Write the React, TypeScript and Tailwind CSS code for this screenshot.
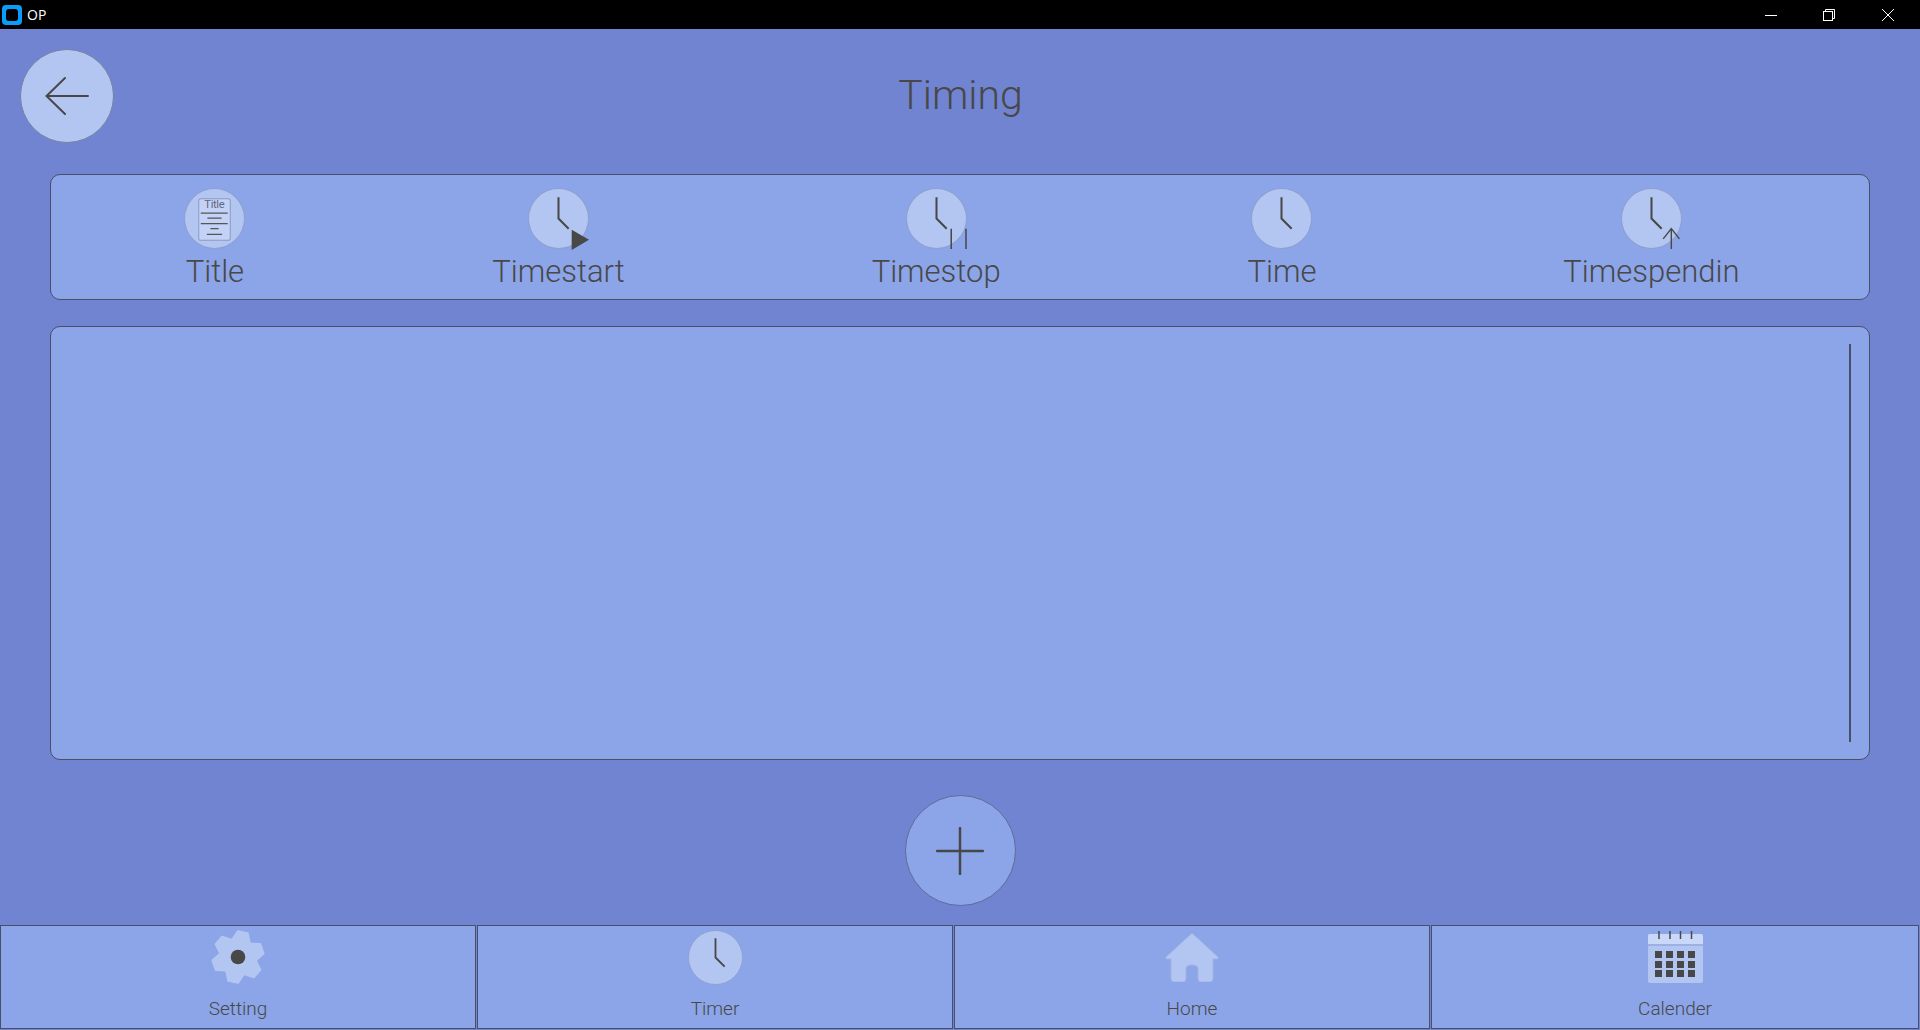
import React from 'react';

const DARK = '#484848';
const FILL = '#b3c6f2';
const RIM = '#8e9fd0';

function ClockIcon({ size = 61, children }: { size?: number; children?: React.ReactNode }) {
  return (
    <svg width={size} height={size} viewBox="0 0 60 60" className="overflow-visible shrink-0">
      <circle cx="30" cy="30" r="29.5" fill={FILL} stroke={RIM} strokeWidth="1" />
      <path d="M30 9V30L40 40" fill="none" stroke={DARK} strokeWidth="2" />
      {children}
    </svg>
  );
}

function TitleIcon() {
  return (
    <svg width="61" height="61" viewBox="0 0 60 60" className="shrink-0">
      <circle cx="30" cy="30" r="29.5" fill={FILL} stroke={RIM} strokeWidth="1" />
      <rect x="14.5" y="10.5" width="31" height="41" rx="2" fill="#c3d2f6" stroke="#8f9bc0" strokeWidth="1" />
      <text x="30" y="20" textAnchor="middle" fontSize="11" fill="#5f6880" fontFamily="Roboto, sans-serif" fontWeight="400" textLength="20">Title</text>
      <path d="M16.5 24.7H43M23 29.7H37M16.5 35H43M26 40H34M22.5 45.7H37.5" fill="none" stroke="#555" strokeWidth="1.3" />
    </svg>
  );
}

function GearIcon() {
  // six teeth, first one 11deg clockwise from straight up
  const pts: string[] = [];
  for (let i = 0; i < 6; i++) {
    const a = 11 + i * 60;
    const offs: [number, number][] = [[-27, 18.5], [-11, 25.5], [11, 25.5], [27, 18.5]];
    offs.forEach(([d, r]) => {
      const rad = ((a + d - 90) * Math.PI) / 180;
      pts.push(`${(27 + r * Math.cos(rad)).toFixed(2)},${(27 + r * Math.sin(rad)).toFixed(2)}`);
    });
  }
  return (
    <svg width="54" height="54" viewBox="0 0 54 54" className="shrink-0 overflow-visible">
      <polygon points={pts.join(' ')} fill={FILL} stroke={FILL} strokeWidth="2.5" strokeLinejoin="round" />
      <circle cx="27" cy="27" r="7.3" fill={DARK} />
    </svg>
  );
}

function HomeIcon() {
  return (
    <svg width="54" height="50" viewBox="0 0 54 50" className="shrink-0">
      <path
        d="M27 1L53 25Q54 27 52 27H48V47Q48 50 45 50H36Q33 50 33 47V37Q33 33 27 33Q21 33 21 37V47Q21 50 18 50H9Q6 50 6 47V27H2Q0 27 1 25Z"
        fill={FILL}
        stroke="#9fb2e6"
        strokeWidth="1"
      />
    </svg>
  );
}

function CalendarIcon() {
  const xs = [7, 18, 29, 40];
  const ys = [20, 30, 39];
  return (
    <svg width="55" height="52" viewBox="0 0 55 52" className="shrink-0">
      <rect x="0" y="3" width="55" height="49" rx="2" fill={FILL} />
      <path d="M0 13V5Q0 3 2 3H53Q55 3 55 5V13Z" fill="#c9d7f8" />
      <rect x="0" y="13" width="55" height="2" fill="#9db0e4" />
      {[11, 22, 32.5, 43.5].map((x) => (
        <path key={x} d="M0 0V8" transform={`translate(${x} 0)`} stroke={DARK} strokeWidth="1.5" />
      ))}
      {ys.map((y) => xs.map((x) => <rect key={`${x}-${y}`} x={x} y={y} width="7" height="7" fill={DARK} />))}
    </svg>
  );
}

const columns = [
  { label: 'Title', icon: <TitleIcon /> },
  {
    label: 'Timestart',
    icon: (
      <ClockIcon>
        <path d="M43 41L60 51L43 61Z" fill={DARK} />
      </ClockIcon>
    ),
  },
  {
    label: 'Timestop',
    icon: (
      <ClockIcon>
        <path d="M44.5 40V60M59 40V60" fill="none" stroke={DARK} strokeWidth="1.5" />
      </ClockIcon>
    ),
  },
  { label: 'Time', icon: <ClockIcon /> },
  {
    label: 'Timespendin',
    icon: (
      <ClockIcon>
        <path d="M49.5 60V40M41.5 50L49.5 40L57.5 50" fill="none" stroke={DARK} strokeWidth="1.4" />
      </ClockIcon>
    ),
  },
];

const tabs = [
  { label: 'Setting', icon: <GearIcon />, cls: 'w-[476px]' },
  { label: 'Timer', icon: <ClockIcon size={55} />, cls: 'w-[476px]' },
  { label: 'Home', icon: <HomeIcon />, cls: 'w-[476px]' },
  { label: 'Calender', icon: <CalendarIcon />, cls: 'w-[488px]' },
];

export default function App() {
  return (
    <div className="w-[1920px] h-[1030px] overflow-hidden flex flex-col bg-[#7084d1] text-[#484848] font-['Roboto',sans-serif] font-light">
      {/* window title bar */}
      <div className="h-[29px] shrink-0 bg-black flex items-center text-white">
        <div className="ml-[2px] w-5 h-5 rounded-[4px] bg-[#0a9bfb] flex items-center justify-center">
          <div className="w-3 h-3 rounded-[3px] bg-black" />
        </div>
        <span className="ml-[5px] text-[14px] font-normal font-['Open_Sans',sans-serif]">OP</span>
        <div className="ml-auto flex items-center h-full">
          <svg width="12" height="12" viewBox="0 0 12 12" className="mr-[46px]">
            <path d="M0 6.5H12" stroke="#fff" strokeWidth="1" />
          </svg>
          <svg width="12" height="12" viewBox="0 0 12 12" className="mr-[47px]">
            <path d="M2.5 2.5V.5H11.5V9.5H9.5" fill="none" stroke="#fff" strokeWidth="1" />
            <rect x=".5" y="2.5" width="9" height="9" fill="none" stroke="#fff" strokeWidth="1" />
          </svg>
          <svg width="12" height="12" viewBox="0 0 12 12" className="mr-[26px]">
            <path d="M0 0L12 12M12 0L0 12" stroke="#fff" strokeWidth="1" />
          </svg>
        </div>
      </div>

      {/* header */}
      <div className="mt-5 ml-5 mr-[19px] h-[93px] shrink-0 grid grid-cols-[94px_1fr_94px] items-center">
        <button className="w-[94px] h-[94px] rounded-full bg-[#b3c6f2] border border-[#77809f] flex items-center justify-center">
          <svg width="44" height="38" viewBox="0 0 44 38">
            <path d="M1.5 19H43M20 1L1.5 19L20 37" fill="none" stroke={DARK} strokeWidth="2" strokeLinecap="round" />
          </svg>
        </button>
        <h1 className="text-center text-[41px] leading-none font-light mb-[2px]">Timing</h1>
        <div />
      </div>

      {/* column headers */}
      <div className="mt-8 ml-[50px] w-[1820px] h-[126px] shrink-0 rounded-[10px] border border-[#484f66] bg-[#8ba5e8] flex justify-around pl-[10px] pr-[6px] pt-[13px]">
        {columns.map((c) => (
          <div key={c.label} className="flex flex-col items-center">
            {c.icon}
            <span className="mt-1 text-[31px] leading-[38px]">{c.label}</span>
          </div>
        ))}
      </div>

      {/* list */}
      <div className="mt-[26px] ml-[50px] w-[1820px] h-[434px] shrink-0 rounded-[10px] border border-[#484f66] bg-[#8ba5e8] flex justify-end pr-[18px] py-[17px]">
        <div className="w-[2px] h-full bg-[#484f66]" />
      </div>

      {/* add */}
      <div className="mt-[35px] h-[110px] shrink-0 flex justify-center">
        <button className="w-[111px] h-[111px] rounded-full bg-[#8ba5e8] border border-[#5f6b96] flex items-center justify-center">
          <svg width="48" height="48" viewBox="0 0 48 48">
            <path d="M1 24H47M24 1V47" fill="none" stroke={DARK} strokeWidth="2.5" strokeLinecap="round" />
          </svg>
        </button>
      </div>

      {/* bottom tabs */}
      <div className="mt-5 h-[104px] shrink-0 flex gap-px">
        {tabs.map((t) => (
          <div key={t.label} className={`${t.cls} h-full border border-[#484f66] bg-[#8ba5e8] flex flex-col items-center`}>
            <div className="h-[60px] flex items-center justify-center mt-[1px]">{t.icon}</div>
            <span className="mt-[10px] text-[19px] leading-6">{t.label}</span>
          </div>
        ))}
      </div>
    </div>
  );
}
